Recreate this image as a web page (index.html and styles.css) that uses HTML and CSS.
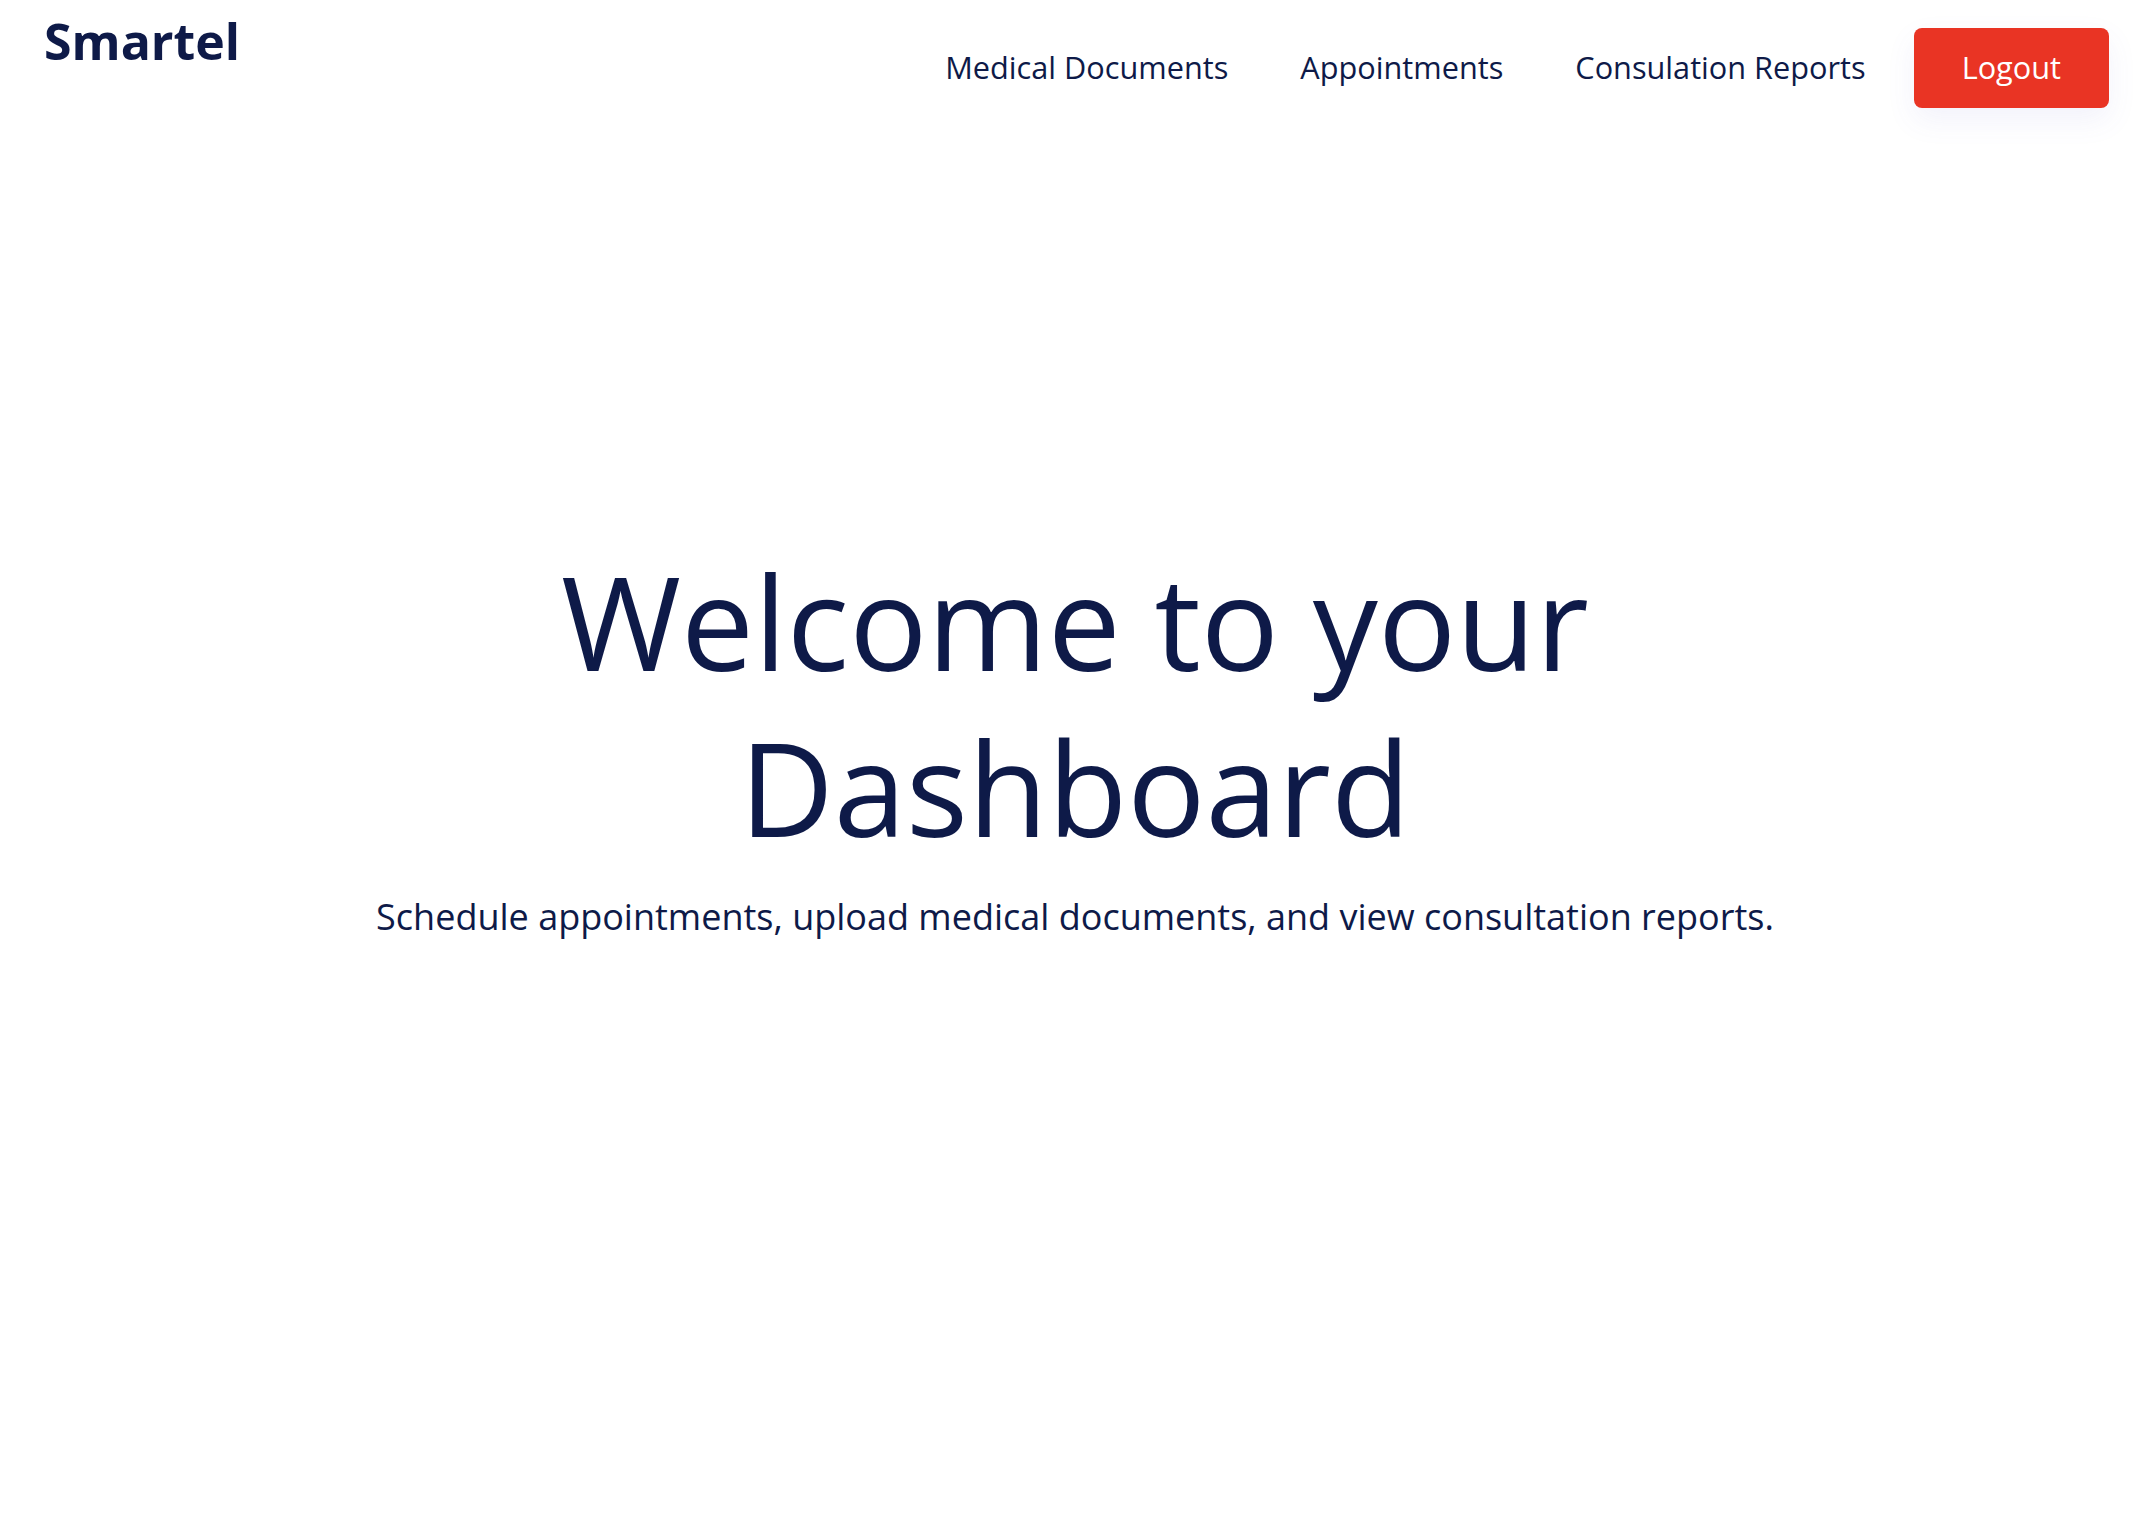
FILE: index.html
```html
<!DOCTYPE html>
<html lang="en">
<head>
<meta charset="utf-8">
<title>Smartel Dashboard</title>
<link rel="stylesheet" href="styles.css">
</head>
<body>
<header class="header">
  <div class="logo">Smartel</div>
  <nav class="nav">
    <a class="nav-link" href="#">Medical Documents</a>
    <a class="nav-link" href="#">Appointments</a>
    <a class="nav-link" href="#">Consulation Reports</a>
    <button class="logout">Logout</button>
  </nav>
</header>
<main class="hero">
  <h1 class="hero-title">Welcome to your Dashboard</h1>
  <p class="hero-sub">Schedule appointments, upload medical documents, and view consultation reports.</p>
</main>
</body>
</html>
```

FILE: styles.css
```css
* { box-sizing: border-box; }
html, body {
  margin: 0;
  padding: 0;
  background: #ffffff;
}
body {
  font-family: "Open Sans", "Noto Sans", sans-serif;
  color: #0e1a48;
  min-height: 1518px;
}
.header {
  display: flex;
  justify-content: space-between;
  align-items: flex-start;
  padding: 0 41px 0 44px;
}
.logo {
  font-size: 50px;
  font-weight: 700;
  letter-spacing: 0;
  line-height: 1.362;
  margin-top: 7px;
  color: #0e1a48;
}
.nav {
  display: flex;
  align-items: center;
  gap: 24px;
  margin-top: 28px;
}
.nav-link {
  font-size: 30.7px;
  color: #0e1a48;
  text-decoration: none;
  padding: 0 24px;
  line-height: 1.362;
}
.logout {
  font-family: inherit;
  font-size: 30.7px;
  line-height: 1.362;
  color: #ffffff;
  background: #e93424;
  border: none;
  border-radius: 8px;
  padding: 19px 48px;
  box-shadow: 0 12px 30px rgba(90, 90, 200, 0.08);
  cursor: pointer;
}
.hero {
  display: flex;
  flex-direction: column;
  align-items: center;
  text-align: center;
  padding-top: 430px;
}
.hero-title {
  font-size: 130px;
  font-weight: 400;
  line-height: 166px;
  margin: 0;
  max-width: 1300px;
}
.hero-sub {
  font-size: 36px;
  line-height: 54px;
  margin: 20px 0 0;
}
```
